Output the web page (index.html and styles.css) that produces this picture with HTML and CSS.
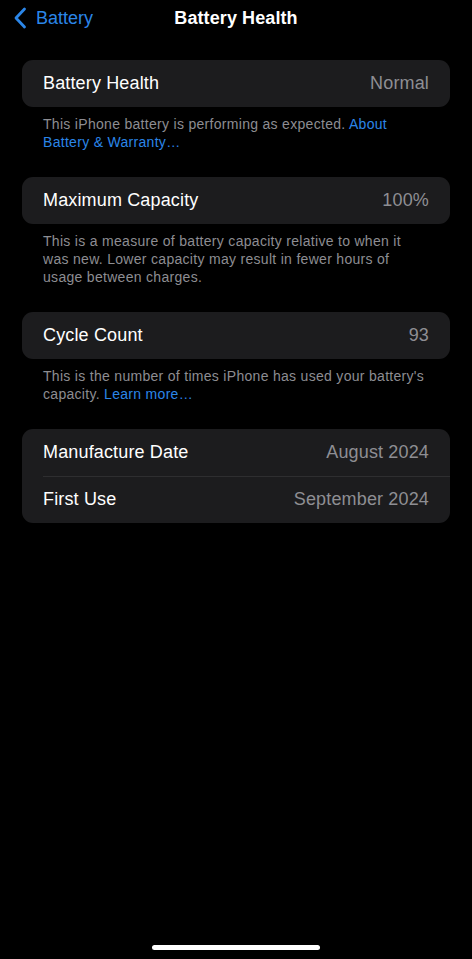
FILE: index.html
```html
<!DOCTYPE html>
<html>
<head>
<meta charset="utf-8">
<link rel="stylesheet" href="styles.css">
</head>
<body>
<div class="screen">
  <header class="nav">
    <a class="back">
      <svg class="chev" width="14" height="22" viewBox="0 0 14 22"><path d="M11.5 2 L3 11 L11.5 20" fill="none" stroke="#2b86e8" stroke-width="2.8" stroke-linecap="round" stroke-linejoin="round"/></svg>
      <span>Battery</span>
    </a>
    <h1 class="title">Battery Health</h1>
  </header>

  <main class="content">
    <section class="group">
      <div class="card">
        <div class="row"><span class="label">Battery Health</span><span class="value">Normal</span></div>
      </div>
      <p class="foot">This iPhone battery is performing as expected. <span class="link">About Battery &amp; Warranty…</span></p>
    </section>

    <section class="group">
      <div class="card">
        <div class="row"><span class="label">Maximum Capacity</span><span class="value">100%</span></div>
      </div>
      <p class="foot">This is a measure of battery capacity relative to when it was new. Lower capacity may result in fewer hours of usage between charges.</p>
    </section>

    <section class="group">
      <div class="card">
        <div class="row"><span class="label">Cycle Count</span><span class="value">93</span></div>
      </div>
      <p class="foot">This is the number of times iPhone has used your battery's capacity. <span class="link">Learn more…</span></p>
    </section>

    <section class="group">
      <div class="card">
        <div class="row"><span class="label">Manufacture Date</span><span class="value">August 2024</span></div>
        <div class="row sep"><span class="label">First Use</span><span class="value">September 2024</span></div>
      </div>
    </section>
  </main>

  <div class="home"></div>
</div>
</body>
</html>
```

FILE: styles.css
```css
* { box-sizing: border-box; margin: 0; padding: 0; }
html, body { background: #000; }
body {
  width: 472px;
  height: 959px;
  overflow: hidden;
  font-family: "Liberation Sans", Arial, sans-serif;
  color: #fff;
}
.screen {
  position: relative;
  width: 472px;
  height: 959px;
  display: flex;
  flex-direction: column;
}
.nav {
  position: relative;
  height: 36px;
  display: flex;
  align-items: center;
  justify-content: center;
}
.back {
  position: absolute;
  left: 13px;
  top: 7px;
  display: flex;
  align-items: center;
  gap: 9px;
  color: #2b86e8;
  font-size: 18px;
}
.chev { display: block; }
.title {
  font-size: 18px;
  font-weight: bold;
  letter-spacing: 0.1px;
}
.content {
  padding: 24px 22px 0 22px;
  display: flex;
  flex-direction: column;
}
.group { margin-bottom: 26px; }
.card {
  background: #1c1c1e;
  border-radius: 11px;
  overflow: hidden;
}
.row {
  height: 47px;
  display: flex;
  align-items: center;
  justify-content: space-between;
  padding: 0 21px;
  font-size: 18px;
  letter-spacing: 0.15px;
  position: relative;
}
.row.sep::before {
  content: "";
  position: absolute;
  left: 21px;
  right: 0;
  top: 0;
  height: 1px;
  background: #2e2e30;
}
.label { color: #fff; }
.value { color: #8e8e93; }
.foot {
  padding: 8px 21px 0 21px;
  font-size: 14px;
  line-height: 18px;
  letter-spacing: 0.3px;
  color: #8d8d92;
}
.link { color: #2b86e8; }
.home {
  position: absolute;
  left: 152px;
  top: 945px;
  width: 168px;
  height: 5px;
  border-radius: 3px;
  background: #fff;
}
```
